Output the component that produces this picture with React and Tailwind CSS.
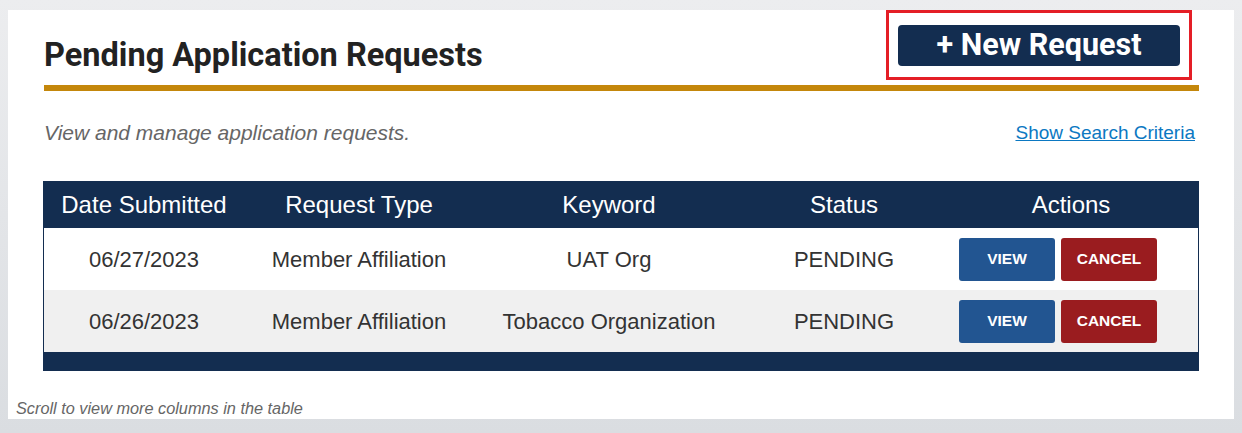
const requests = [
  { date: '06/27/2023', type: 'Member Affiliation', keyword: 'UAT Org', status: 'PENDING' },
  { date: '06/26/2023', type: 'Member Affiliation', keyword: 'Tobacco Organization', status: 'PENDING' },
]

const PendingRequests = () => {
  return (
    <div className="flex h-[433px] w-full flex-col bg-gradient-to-b from-[#ecedef] to-[#dadde1] pb-[14px] pl-[8px] pr-[8px] pt-[10px] font-['Liberation_Sans',Arial,sans-serif]">
      <div className="flex h-[409px] flex-col bg-white">
        <div className="pl-[36px] pr-[35px]">
          <div className="flex items-start justify-between">
            <h1 className="mt-[25px] font-['Roboto',sans-serif] text-[32.5px] font-bold leading-[40px] text-[#222]">
              Pending Application Requests
            </h1>
            <div className="mr-[7px] border-[3px] border-[#e41e26] px-[9px] pb-[11px] pt-[12px]">
              <button
                type="button"
                className="flex h-[41px] w-[282px] items-center justify-center rounded-[4px] bg-[#132d50] font-['Roboto',sans-serif] text-[30.5px] font-bold leading-none text-white"
              >
                + New Request
              </button>
            </div>
          </div>
          <div className="mt-[5px] h-[6px] bg-[#c4870b]" />

          <div className="mt-[30px] flex items-center justify-between">
            <p className="text-[21px] italic leading-[24px] text-[#666]">
              View and manage application requests.
            </p>
            <a href="#" className="mr-[4px] text-[19px] leading-[22px] text-[#0b78c2] underline">
              Show Search Criteria
            </a>
          </div>

          <div className="-ml-px mt-[36px] border-x border-[#132d50]">
            <table className="w-full table-fixed border-collapse text-center">
              <colgroup>
                <col className="w-[200px]" />
                <col className="w-[230px]" />
                <col className="w-[270px]" />
                <col className="w-[200px]" />
                <col />
              </colgroup>
              <thead className="bg-[#132d50] text-[24px] text-white">
                <tr className="h-[47px]">
                  <th className="font-normal">Date Submitted</th>
                  <th className="font-normal">Request Type</th>
                  <th className="font-normal">Keyword</th>
                  <th className="font-normal">Status</th>
                  <th className="font-normal">Actions</th>
                </tr>
              </thead>
              <tbody className="text-[22px] text-[#333]">
                {requests.map((r, i) => (
                  <tr key={r.date} className={`h-[62px] ${i % 2 === 1 ? 'bg-[#f0f0f0]' : 'bg-white'}`}>
                    <td>{r.date}</td>
                    <td>{r.type}</td>
                    <td>{r.keyword}</td>
                    <td>{r.status}</td>
                    <td className="pl-[15px] text-left">
                      <div className="flex gap-[6px]">
                        <button
                          type="button"
                          className="h-[43px] w-[96px] rounded-[3px] bg-[#225591] text-[15.5px] font-bold text-white"
                        >
                          VIEW
                        </button>
                        <button
                          type="button"
                          className="h-[43px] w-[96px] rounded-[3px] bg-[#9a1c1f] text-[15.5px] font-bold text-white"
                        >
                          CANCEL
                        </button>
                      </div>
                    </td>
                  </tr>
                ))}
                <tr className="h-[19px] bg-[#132d50]">
                  <td colSpan={5} />
                </tr>
              </tbody>
            </table>
          </div>
        </div>

        <p className="mt-[27px] pl-[8px] text-[16.3px] italic leading-[20px] text-[#666]">
          Scroll to view more columns in the table
        </p>
      </div>
    </div>
  )
}

export default function App() {
  return <PendingRequests />
}
